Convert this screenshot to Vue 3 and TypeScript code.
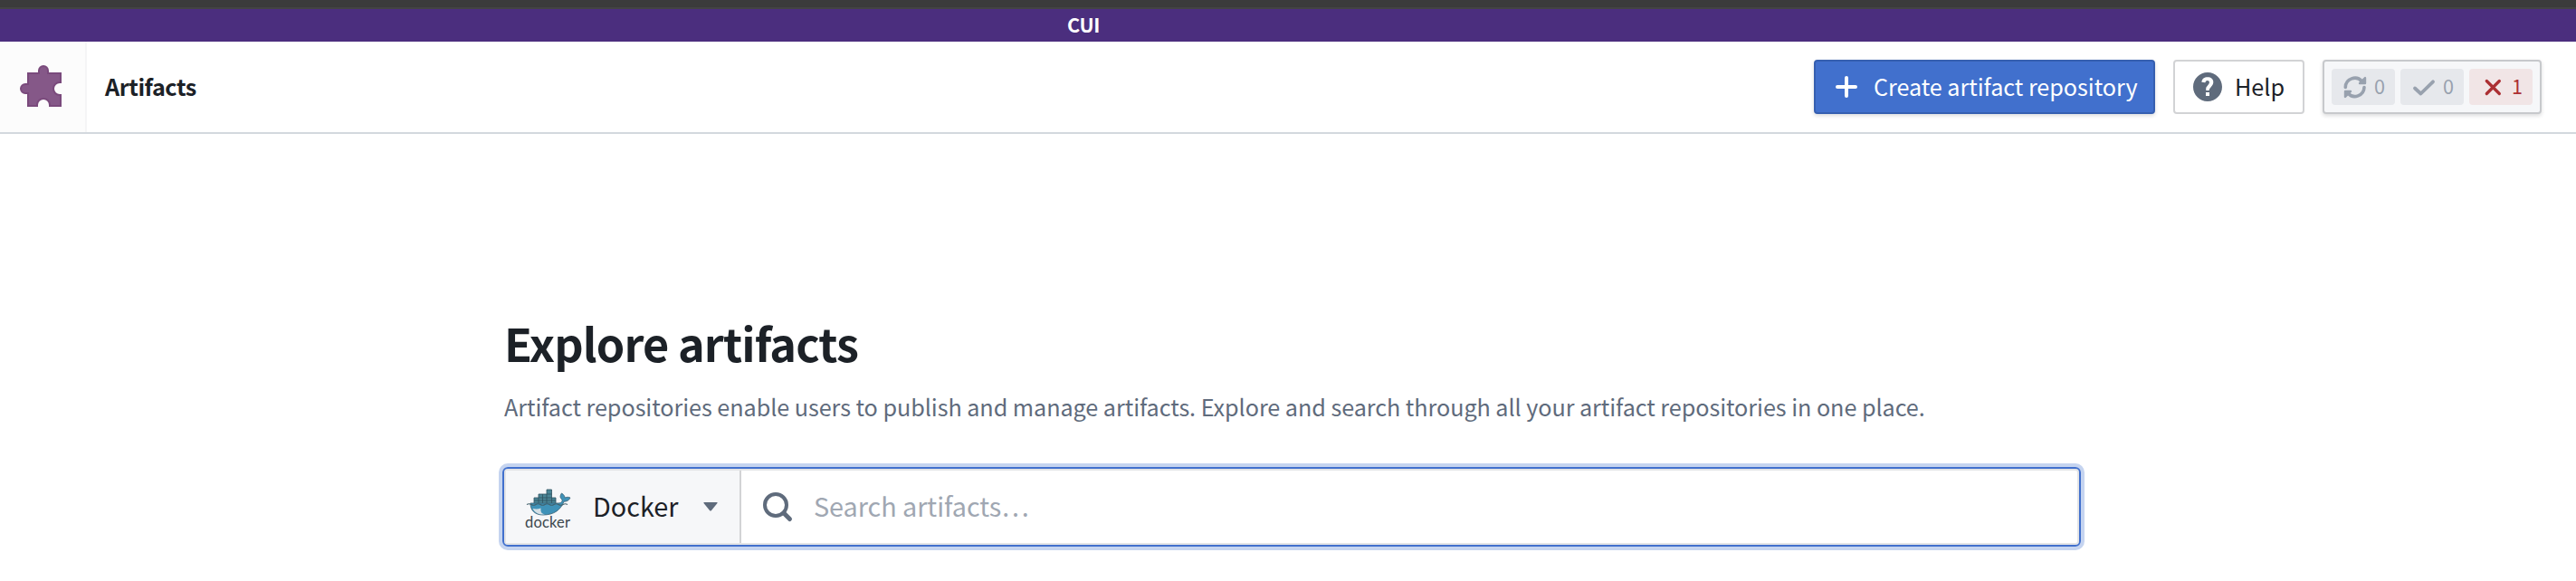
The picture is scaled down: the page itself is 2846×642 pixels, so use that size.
<script setup lang="ts">
interface Status { kind: string; count: number }
const statuses: Status[] = [
  { kind: 'sync', count: 0 },
  { kind: 'done', count: 0 },
  { kind: 'failed', count: 1 },
]
</script>

<template>
  <div class="page">
    <div class="strip"></div>
    <div class="banner"><span class="t-cui">CUI</span></div>
    <header class="header">
      <div class="app-icon">
        <svg width="48" height="48" viewBox="0 0 48 48"><path d="M9 10H21V7a5 5 0 0 1 10 0v3H45V20H44a7 7 0 0 0 0 14h1V46H33V45a7 7 0 0 0-14 0v1H9V32H6a5 5 0 0 1 0-10h3z" fill="#855888" stroke="#7a4a7c" stroke-width="2"/></svg>
      </div>
      <h2 class="t-title">Artifacts</h2>
      <div class="actions">
        <button class="btn primary">
          <svg width="24" height="24" viewBox="0 0 24 24"><path d="M12 2v20M2 12h20" stroke="#fff" stroke-width="4" stroke-linecap="round"/></svg>
          <span class="t-create">Create artifact repository</span>
        </button>
        <button class="btn help">
          <svg width="32" height="32" viewBox="0 0 16 16"><path fill="#5f6b7c" d="M8 0C3.580 0 0 3.580 0 8s3.580 8 8 8 8-3.580 8-8-3.580-8-8-8zm1 13H7v-2h2v2zm1.930-6.520c-.14.320-.35.640-.62.970L9.250 8.830c-.12.150-.24.290-.28.420-.04.130-.09.300-.09.520V10H7.120V8.880s.05-.51.210-.71L8.400 6.730c.22-.26.350-.49.440-.68.090-.19.120-.38.120-.58 0-.30-.10-.55-.28-.75-.18-.19-.44-.28-.76-.28-.33 0-.59.100-.78.290-.19.190-.33.460-.40.810-.03.110-.10.150-.20.140l-1.700-.25c-.12-.01-.16-.08-.14-.19.120-.82.460-1.470 1.030-1.940.57-.48 1.320-.72 2.250-.72.470 0 .90.070 1.290.220s.72.340 1 .59c.28.250.49.550.65.890.15.350.22.720.22 1.120s-.07.750-.21 1.080z"/></svg>
          <span class="t-help">Help</span>
        </button>
        <div class="statuses">
          <div v-for="s in statuses" :key="s.kind" class="chip" :class="s.kind">
            <svg v-if="s.kind === 'sync'" width="26" height="28" viewBox="0 0 26 28" fill="none" stroke="#98a1ae" stroke-width="3.600"><path d="M2.300 14.500A10.300 10.300 0 0 1 20.500 8M23 14.500A10.300 10.300 0 0 1 5 21" stroke-linecap="round"/><path d="M24 4v6h-6zM2 25v-6h6z" fill="#98a1ae" stroke-width="2.400" stroke-linejoin="round"/></svg>
            <svg v-else-if="s.kind === 'done'" width="26" height="26" viewBox="0 0 26 26" fill="none" stroke="#98a1ae" stroke-width="3.800" stroke-linecap="round" stroke-linejoin="round"><path d="M3 14.500l6.500 6L23 7.300"/></svg>
            <svg v-else width="26" height="26" viewBox="0 0 26 26" fill="none" stroke="#ac2f33" stroke-width="3.300" stroke-linecap="round"><path d="M6.300 6.500l14 14M20.300 6.500l-14 14"/></svg>
            <span class="count">{{ s.count }}</span>
          </div>
        </div>
      </div>
    </header>
    <main class="main">
      <h1 class="t-h1">Explore artifacts</h1>
      <p class="t-sub">Artifact repositories enable users to publish and manage artifacts. Explore and search through all your artifact repositories in one place.</p>
      <div class="search">
        <div class="type">
          <svg class="docker" width="52" height="48" viewBox="0 0 52 48">
            <path d="M10 20V14h5V10h9V5h5.500v9H34v6z" fill="#4a8596"/>
            <path d="M10 14h19.500M15 10h14.500V5H24v15M10 20V14M15 10v10M19.500 10v10M29.500 10v10M34 20v-6h-4.500M10 17h24" fill="none" stroke="#2e5260" stroke-width=".8"/>
            <path d="M6 20h30c4 0 5.500-1.500 5-4-2.500-2-2.500-4-.5-7 2.500 1.500 3.500 3.500 3.500 5 2.500-1 4.500-.8 6 0-1.500 3.300-4 4.200-7 4.200C39.500 27.500 32 33 20 33 11 33 6 28 6 20z" fill="#3f92b8" stroke="#386173" stroke-width=".8"/>
            <path d="M8.500 26c3.500.8 6.500.5 9-.5-.3 4 .5 6 4.500 7-6.500.3-11-1.500-13.500-6.500z" fill="#d5e0e5"/>
            <path d="M2 21.500q2.500-1.500 5 0t5 0 5 0 5 0 5 0 5 0 5 0 5 0 5 0" fill="none" stroke="#42616c" stroke-width="1.200"/>
            <text x="0" y="46.500" textLength="50" lengthAdjust="spacing">docker</text>
          </svg>
          <span class="t-docker">Docker</span>
          <svg class="caret" width="16" height="10" viewBox="0 0 16 10"><path d="M1 0h14q1 0 .5 1L9 9Q8 10 7 9L.5 1Q0 0 1 0z" fill="#5f6b7c"/></svg>
        </div>
        <div class="field">
          <svg width="32" height="32" viewBox="0 0 32 32" fill="none" stroke="#5f6b7c" stroke-width="4"><circle cx="14" cy="14" r="12"/><path d="M23 23l6.500 6.500" stroke-width="5" stroke-linecap="round"/></svg>
          <span class="t-ph">Search artifacts…</span>
        </div>
      </div>
    </main>
  </div>
</template>

<style>
body { margin: 0; background: #fff; }
</style>
<style scoped>
.page { width: 2846px; height: 642px; overflow: hidden; background: #fff; color: #1c2127; font-family: "Noto Sans CJK JP", "Noto Sans CJK SC", sans-serif; font-size: 25.2px; }
.page * { box-sizing: border-box; }
svg { display: block; flex: none; overflow: visible; }
h1, h2, p { margin: 0; }
span, h1, h2, p { white-space: nowrap; }
.strip { height: 10px; background: #3b3b3b; border-bottom: 2px solid #444; }
.banner { height: 36px; background: #4b2e7e; color: #fff; display: flex; align-items: center; padding-left: 1179px; font-size: 21.600px; font-weight: 700; line-height: 36px; }
.t-cui { letter-spacing: -.3px; padding-bottom: 2px; }
.header { height: 102px; border-bottom: 2px solid #d3d8de; display: flex; align-items: center; }
.app-icon { width: 96px; height: 100px; background: #fcfcfc; border-right: 2px solid #f5f5f6; padding: 25px 0 0 22px; }
.t-title { margin-left: 20px; font-size: 25.200px; font-weight: 700; line-height: 40px; letter-spacing: -.45px; padding-bottom: 2px; }
.actions { margin-left: auto; display: flex; gap: 20px; margin-right: 38px; }
.btn { height: 60px; border-radius: 4px; display: flex; align-items: center; font: inherit; line-height: 40px; color: #1c2127; }
.t-create, .t-help, .count { padding-bottom: 2px; }
.t-create { letter-spacing: -.04px; }
.primary { width: 377px; padding: 0 0 0 22px; gap: 18px; background: #4170cd; border: 2px solid #365fb0; color: #fff; box-shadow: 0 2px 4px rgba(17, 20, 24, .15); }
.help { width: 145px; padding: 0 0 0 20px; gap: 14px; background: #fff; border: 2px solid #d2d3d5; }
.statuses { width: 242px; height: 60px; padding: 8px; display: flex; gap: 6px; border: 2px solid #c7c9cc; border-radius: 4px; background: #f6f7f9; box-shadow: 0 2px 4px rgba(17, 20, 24, .15); }
.chip { width: 70px; height: 40px; border-radius: 4px; display: flex; align-items: center; gap: 8px; padding-left: 13px; background: #e6e8ec; color: #98a1ae; font-size: 21.600px; line-height: 38px; }
.failed { background: #f1e5e6; color: #ac2f33; }
.main { width: 1744px; margin-left: 555px; padding-top: 193px; }
.t-h1 { margin-left: 2px; font-size: 50.400px; font-weight: 700; line-height: 76px; letter-spacing: -.88px; }
.t-sub { margin-left: 2px; margin-top: 12px; color: #5f6b7c; line-height: 40px; letter-spacing: -.056px; }
.search { margin-top: 47px; width: 1744px; height: 88px; border: 2px solid #4170cd; border-radius: 6px; box-shadow: 0 0 0 4px #c5d4f0, inset 0 0 0 2px #e3e4e6; padding: 2px; display: flex; font-size: 28.800px; line-height: 40px; }
.type { width: 260px; border-right: 2px solid #d2d3d5; background: #f6f7f9; display: flex; align-items: center; padding-left: 21px; }
.docker text { font-family: Lato, sans-serif; font-size: 16.5px; fill: #3d474d; }
.t-docker { margin-left: 23px; width: 122px; padding-bottom: 3px; }
.field { display: flex; align-items: center; padding-left: 24px; gap: 24px; color: #a0a7b2; }
.t-ph { padding-bottom: 3px; letter-spacing: -.04px; }
</style>
